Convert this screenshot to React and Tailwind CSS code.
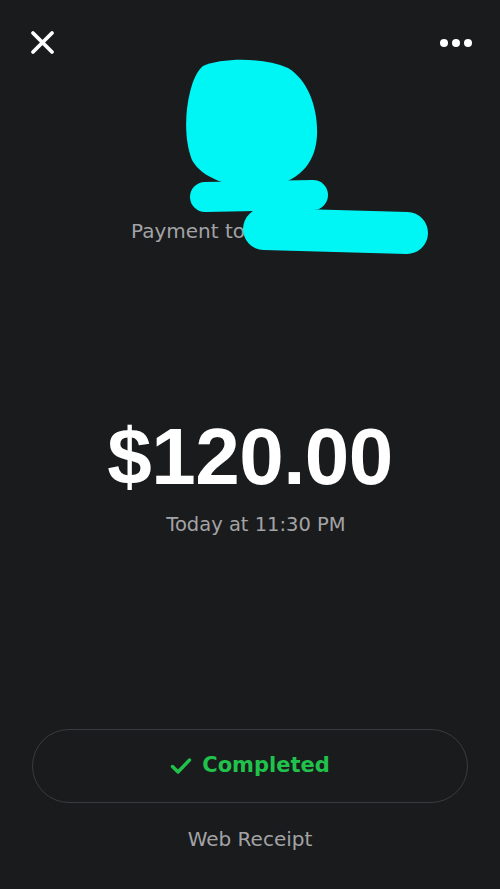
import React from 'react';

function CloseIcon() {
  return (
    <svg width="25" height="25" viewBox="0 0 25 25" fill="none">
      <path d="M3 3 L22 22 M22 3 L3 22" stroke="#ffffff" strokeWidth="3.8" strokeLinecap="round" />
    </svg>
  );
}

function MoreIcon() {
  return (
    <svg width="34" height="10" viewBox="0 0 34 10">
      <circle cx="5" cy="5" r="4" fill="#ffffff" />
      <circle cx="17" cy="5" r="4" fill="#ffffff" />
      <circle cx="29" cy="5" r="4" fill="#ffffff" />
    </svg>
  );
}

function CheckIcon() {
  return (
    <svg width="22" height="18" viewBox="0 0 22 18" fill="none">
      <path d="M2.5 9.5 L8 15 L19.5 3" stroke="#21c24b" strokeWidth="3.4" strokeLinecap="round" strokeLinejoin="round" />
    </svg>
  );
}

// cyan marker scribble that covers the avatar and the name
function Scribble() {
  return (
    <svg className="absolute left-0 top-0" width="500" height="280" viewBox="0 0 500 280">
      <path
        d="M203,66 C222,58 262,57 288,68 C308,80 318,108 317,135 C316,160 302,180 272,186 C240,190 204,182 192,160 C184,140 185,112 190,92 C193,80 197,71 203,66 Z"
        fill="#00f5f5"
      />
      <path d="M205,197 L313,195" stroke="#00f5f5" strokeWidth="30" strokeLinecap="round" />
      <path d="M264,229 L407,233" stroke="#00f5f5" strokeWidth="42" strokeLinecap="round" />
    </svg>
  );
}

export default function App() {
  return (
    <div className="relative flex h-[889px] w-full flex-col bg-[#1a1b1d]" style={{ fontFamily: '"DejaVu Sans", sans-serif' }}>
      {/* Top bar */}
      <div className="flex items-center justify-between pl-[30px] pr-[27px] pt-[30px]">
        <CloseIcon />
        <MoreIcon />
      </div>

      {/* Payment to */}
      <div className="mt-[164px] flex justify-center text-[20px] leading-6 text-[#a3a3a6]">
        <span>Payment to</span>
        <span className="ml-[6px] w-[118px]">&nbsp;</span>
      </div>

      {/* Amount */}
      <div className="mt-[168px] text-center text-[80px] font-bold leading-[92px] tracking-[-0.5px] text-white" style={{ fontFamily: '"Liberation Sans", sans-serif' }}>
        $120.00
      </div>
      <div className="mt-[10px] pl-[12px] text-center text-[19.5px] leading-6 text-[#a3a3a6]">
        Today at 11:30 PM
      </div>

      <div className="flex-1" />

      {/* Status */}
      <div className="mx-[32px] flex h-[74px] items-center justify-center gap-[10px] rounded-full border border-[#3a3b3e]">
        <CheckIcon />
        <span className="text-[21px] font-bold text-[#21c24b]">Completed</span>
      </div>
      <div className="mb-[38px] mt-[24px] text-center text-[20px] leading-6 text-[#a3a3a6]">
        Web Receipt
      </div>

      <Scribble />
    </div>
  );
}
